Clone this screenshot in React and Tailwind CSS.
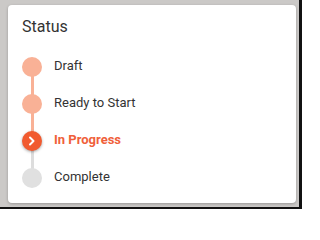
import React from "react";

const steps = [
  { label: "Draft", state: "done" },
  { label: "Ready to Start", state: "done" },
  { label: "In Progress", state: "active" },
  { label: "Complete", state: "todo" },
];

function Dot({ state }) {
  if (state === "active") {
    return (
      <div className="w-[20px] h-[20px] rounded-full bg-[#f15a2f] flex items-center justify-center shadow-[0_1px_3px_rgba(0,0,0,0.35)] z-10">
        <svg width="8" height="10" viewBox="0 0 8 10">
          <path d="M2 1.5 L5.5 5 L2 8.5" fill="none" stroke="#fff" strokeWidth="2" strokeLinecap="round" strokeLinejoin="round" />
        </svg>
      </div>
    );
  }
  return (
    <div
      className={
        "w-[20px] h-[20px] rounded-full z-10 " +
        (state === "done" ? "bg-[#f9b196]" : "bg-[#e0e0e0]")
      }
    />
  );
}

export default function App() {
  return (
    <div
      className="w-[302px] h-[209px] bg-[#cbc9c7] border-r-[3px] border-b-[2px] border-[#111] pl-[8px] pt-[5px] pr-[3px] pb-[4px]"
      style={{ fontFamily: "Roboto, 'Noto Sans', sans-serif" }}
    >
      <div className="w-full h-full bg-white rounded-[4px] shadow-[0_1px_3px_rgba(0,0,0,0.25)] pl-[14px] pt-[10px]">
        <div className="text-[16px] leading-[24px] text-[#333]">Status</div>
        <div className="mt-[9px] relative">
          {steps.map((s, i) => (
            <div key={s.label} className="relative h-[37px] flex items-center">
              {i < steps.length - 1 && (
                <div
                  className={
                    "absolute left-[8.5px] top-1/2 w-[3px] h-[37px] " +
                    (i < 2 ? "bg-[#f9b196]" : "bg-[#dddddd]")
                  }
                />
              )}
              <Dot state={s.state} />
              <div
                className={
                  "ml-[12px] -mt-[2px] text-[13px] " +
                  (s.state === "active"
                    ? "font-bold text-[#f0603a]"
                    : "text-[#333]")
                }
              >
                {s.label}
              </div>
            </div>
          ))}
        </div>
      </div>
    </div>
  );
}
